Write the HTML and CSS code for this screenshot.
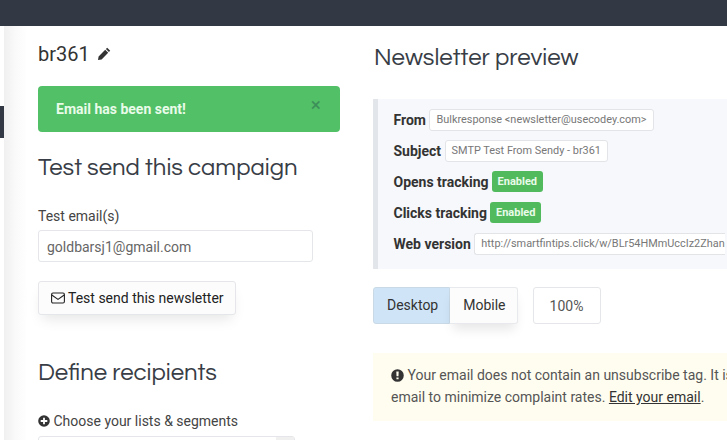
FILE: index.html
```html
<!DOCTYPE html>
<html lang="en">
<head>
<meta charset="utf-8">
<title>br361</title>
<link rel="stylesheet" href="styles.css">
</head>
<body>
<header class="topbar"></header>
<div class="shell">
  <aside class="rail"><span class="rail-mark"></span></aside>
  <main class="content">
    <section class="left">
      <h1 class="title">br361
        <svg class="pencil" viewBox="0 0 14 14" aria-hidden="true"><path d="M10.2.8 13.2 3.8 11.9 5.1 8.9 2.1ZM8.2 2.8 11.2 5.8 4.6 12.4 1 13 1.6 9.4Z"/></svg>
      </h1>
      <div class="alert"><strong>Email has been sent!</strong><span class="close">×</span></div>
      <h2 class="heading">Test send this campaign</h2>
      <label class="label test">Test email(s)</label>
      <div class="input">goldbarsj1@gmail.com</div>
      <button class="btn send">
        <svg class="env" viewBox="0 0 14 12" aria-hidden="true"><rect x=".6" y="1" width="12.8" height="10" rx="1.4"/><path d="M.8 3 7 7.4 13.2 3"/></svg>
        Test send this newsletter</button>
      <h2 class="heading define">Define recipients</h2>
      <div class="label choose">
        <svg class="glyph" viewBox="0 0 12 12" aria-hidden="true"><path d="M6 .2a5.8 5.8 0 1 0 0 11.6A5.8 5.8 0 0 0 6 .2Zm3.3 6.7H6.9v2.4H5.1V6.9H2.7V5.1h2.4V2.7h1.8v2.4h2.4Z"/></svg>
        Choose your lists &amp; segments</div>
      <div class="select"><span class="select-arrow"></span></div>
    </section>
    <section class="right">
      <h2 class="heading preview-title">Newsletter preview</h2>
      <div class="meta">
        <div class="meta-row"><b>From</b><span class="chip">Bulkresponse &lt;newsletter@usecodey.com&gt;</span></div>
        <div class="meta-row"><b>Subject</b><span class="chip">SMTP Test From Sendy - br361</span></div>
        <div class="meta-row"><b>Opens tracking</b><span class="badge">Enabled</span></div>
        <div class="meta-row"><b>Clicks tracking</b><span class="badge">Enabled</span></div>
        <div class="meta-row"><b>Web version</b><span class="chip url">http://smartfintips.click/w/BLr54HMmUccIz2Zhan</span></div>
      </div>
      <div class="controls">
        <div class="group"><span class="seg active">Desktop</span><span class="seg">Mobile</span></div>
        <span class="zoom">100%</span>
      </div>
      <div class="notice">
        <p><svg class="glyph alert-glyph" viewBox="0 0 12 12" aria-hidden="true"><path d="M6 .2a5.8 5.8 0 1 0 0 11.6A5.8 5.8 0 0 0 6 .2Zm1 9.3H5V7.8h2ZM7.1 2.4 6.9 6.8H5.1L4.9 2.4Z"/></svg> Your email does not contain an unsubscribe tag. It is</p>
        <p>email to minimize complaint rates. <a href="#">Edit your email</a>.</p>
      </div>
    </section>
  </main>
</div>
</body>
</html>
```
FILE: styles.css
```css
* { box-sizing: border-box; }
html, body { margin: 0; height: 100%; overflow: hidden; }
body { font-family: Roboto, sans-serif; font-size: 14px; color: #333; background: #fff; width: 727px; height: 440px; }
.topbar { height: 26px; background: #333944; }
.shell { display: flex; height: 414px; overflow: hidden; }
.rail { width: 4px; flex: none; background: #fff; padding-top: 80px; }
.rail-mark { display: block; width: 4px; height: 32px; background: #333944; }
.content { flex: 1; display: flex; padding-left: 34px; min-width: 0; background: linear-gradient(90deg, #f0f0f0, #fafafa 12px, #fff 24px); }
.left { width: 302px; flex: none; }
.right { margin-left: 33px; flex: 1; min-width: 0; overflow: hidden; }
.title { margin: 16px 0 0; font: 400 20px/24px Roboto, sans-serif; color: #333; display: flex; align-items: center; gap: 7px; }
.pencil { width: 14px; height: 14px; fill: #333; }
.alert { margin-top: 20px; height: 46px; width: 302px; background: #51c067; border-radius: 4px; display: flex; justify-content: space-between; align-items: center; padding: 0 19px 0 18px; color: #e9fbe9; }
.alert strong { font-size: 14px; font-weight: 700; }
.close { font-size: 19px; line-height: 1; color: #3d8f5a; margin-top: -9px; }
.heading { margin: 0; font-family: "Questrial", Lato, sans-serif; font-weight: 400; font-size: 24px; line-height: 30px; color: #383d46; }
.alert + .heading { margin-top: 21px; }
.label { display: block; line-height: 18px; font-size: 14px; color: #444; }
.label.test { margin-top: 24px; }
.input { margin-top: 5px; width: 275px; height: 32px; border: 1px solid #e4e6e9; border-radius: 3px; padding: 0 8px; line-height: 32px; color: #666; font-size: 14px; }
.btn { display: flex; align-items: center; gap: 3px; margin-top: 19px; height: 34px; padding: 0 12px 1px; width: 198px; white-space: nowrap; background: #fcfcfc; border: 1px solid #e4e6e9; border-radius: 3px; font: 400 14px Roboto, sans-serif; color: #222; box-shadow: 0 8px 14px -4px rgba(0,0,0,.1); }
.env { width: 14px; height: 12px; fill: none; stroke: #222; stroke-width: 1.1; flex: none; }
.heading.define { margin-top: 43px; }
.choose { margin-top: 24px; }
.glyph { width: 12px; height: 12px; fill: #333; vertical-align: -1px; }
.alert-glyph { width: 13px; height: 13px; vertical-align: -2px; }
.select { position: relative; margin-top: 6px; width: 257px; height: 32px; border: 1px solid #e4e6e9; border-radius: 3px; }
.select-arrow { position: absolute; right: 0; top: 0; bottom: 0; width: 18px; background: #f0f0f0; }
.preview-title { margin-top: 17px; padding-left: 1px; }
.meta { margin-top: 26px; height: 170px; background: #f7f8fb; border-left: 5px solid #e2e5ea; padding: 5px 0 0 15.5px; overflow: hidden; }
.meta-row { display: flex; align-items: center; height: 31px; white-space: nowrap; }
.meta-row b { font-weight: 700; color: #333; }
.chip { margin-left: 3.5px; height: 22px; line-height: 20px; border: 1px solid #e2e4e8; border-radius: 3px; background: #fff; padding: 0 6px; font-size: 10.9px; color: #777; }
.chip.url { border-right: 0; border-radius: 3px 0 0 3px; padding-right: 0; }
.badge { margin-left: 3.5px; height: 21px; line-height: 21px; border-radius: 3px; background: #51ba5d; padding: 0 5.5px; font-size: 11px; font-weight: 700; color: #e9fbe9; }
.controls { display: flex; margin-top: 18px; gap: 15px; }
.group { display: flex; border-radius: 3px; height: 37px; }
.seg { height: 37px; line-height: 35px; padding: 0 11px 0 13px; border: 1px solid #e8e9ec; background: #fcfcfc; color: #333; font-size: 14px; }
.seg.active { background: #cfe5f7; border-color: #c9d9e6; border-radius: 3px 0 0 3px; }
.seg:last-child { border-left: 0; border-radius: 0 3px 3px 0; box-shadow: 0 8px 12px -3px rgba(0,0,0,.1); }
.zoom { width: 68px; height: 37px; line-height: 37px; text-align: center; border: 1px solid #e4e6e9; border-radius: 3px; color: #555; font-size: 14px; }
.notice { margin-top: 29px; height: 68px; background: #fffdf0; padding: 11px 0 0 18px; color: #555; font-size: 14px; line-height: 22px; overflow: hidden; }
.notice p { margin: 0; white-space: nowrap; }
.notice a { color: #333; }
```
